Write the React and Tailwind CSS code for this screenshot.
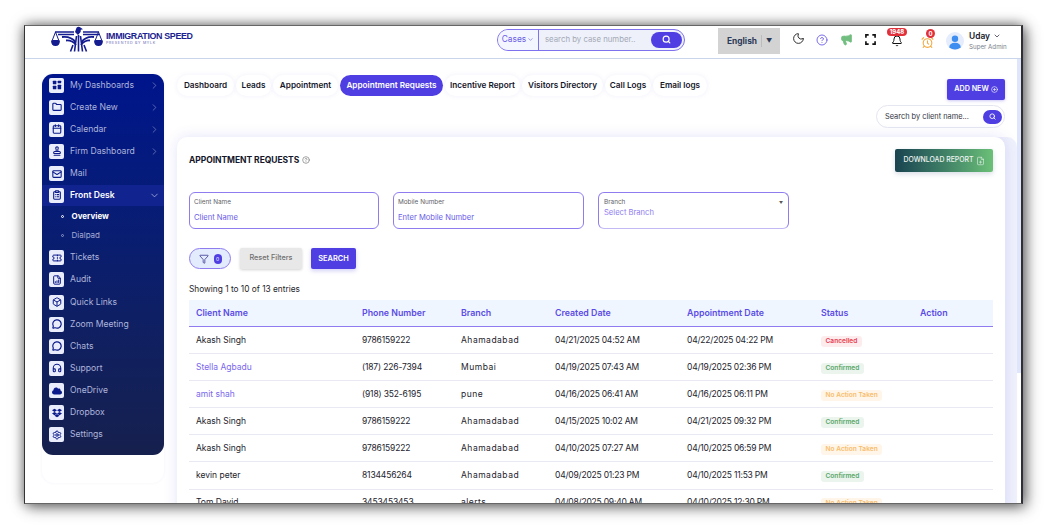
import React from "react";
import { ChevronRight, ChevronDown, Folder, Calendar, Stamp, Mail, ClipboardList, Ticket, FileBarChart, Box, MessageCircle, Headphones, Settings, Search, Moon, CircleHelp, Megaphone, AlarmClock, Bell, Filter, CirclePlus, FilePlus, CircleHelp as Help } from "lucide-react";
import { FaDropbox, FaCloud } from "react-icons/fa";

const font = { fontFamily: "Inter, 'Noto Sans', sans-serif" };

function GridIcon() {
  return (
    <svg viewBox="0 0 12 12" className="w-[10px] h-[10px]" fill="#0b1a8a">
      <rect x="1" y="1" width="4.2" height="4.2" rx=".6" />
      <rect x="6.8" y="1" width="4.2" height="3" rx=".6" />
      <rect x="1" y="6.8" width="4.2" height="4.2" rx=".6" />
      <rect x="6.8" y="5.6" width="4.2" height="5.4" rx=".6" />
    </svg>
  );
}

const ic = "w-[10px] h-[10px] text-[#0b1a8a]";
const menuTop = [
  ["My Dashboards", <GridIcon />, true],
  ["Create New", <Folder className={ic} strokeWidth={2.6} />, true],
  ["Calendar", <Calendar className={ic} strokeWidth={2.6} />, true],
  ["Firm Dashboard", <Stamp className={ic} strokeWidth={2.6} />, true],
  ["Mail", <Mail className={ic} strokeWidth={2.6} />, false],
];
const menuBottom = [
  ["Tickets", <Ticket className={ic} strokeWidth={2.4} />],
  ["Audit", <FileBarChart className={ic} strokeWidth={2.4} />],
  ["Quick Links", <Box className={ic} strokeWidth={2.4} />],
  ["Zoom Meeting", <MessageCircle className={ic} strokeWidth={2.8} />],
  ["Chats", <MessageCircle className={ic} strokeWidth={2.8} />],
  ["Support", <Headphones className={ic} strokeWidth={2.6} />],
  ["OneDrive", <FaCloud className={ic} />],
  ["Dropbox", <FaDropbox className={ic} />],
  ["Settings", <Settings className={ic} strokeWidth={2.4} />],
];

function IconBox({ children }) {
  return (
    <span className="w-[15px] h-[15px] rounded-[2px] bg-[#e9ecfb] flex items-center justify-center shrink-0">
      {children}
    </span>
  );
}

function MenuRow({ label, icon, arrow }) {
  return (
    <div className="h-[22.15px] flex items-center pl-[7px] pr-[4px]">
      <IconBox>{icon}</IconBox>
      <span className="ml-[6px] text-[8.6px] text-[#aeb5dc] flex-1 whitespace-nowrap">{label}</span>
      {arrow && <ChevronRight className="w-[11px] h-[11px] text-[#7f88c4]" strokeWidth={1.5} />}
    </div>
  );
}

function Sidebar() {
  return (
    <div className="w-[122px] ml-[17px] mt-[15px] shrink-0 rounded-[12px] shadow-[0_0_3px_rgba(90,90,200,0.07)] h-[409px]">
      <div className="h-[381px] rounded-[11px] bg-gradient-to-b from-[#00148c] to-[#16204e] overflow-hidden">
        {menuTop.map(([l, i, a]) => <MenuRow key={l} label={l} icon={i} arrow={a} />)}
        <div className="h-[21px] flex items-center pl-[7px] pr-[4px] bg-[#11238f]">
          <IconBox><ClipboardList className={ic} strokeWidth={2.6} /></IconBox>
          <span className="ml-[6px] text-[8.6px] font-semibold text-white flex-1">Front Desk</span>
          <ChevronDown className="w-[11px] h-[11px] text-[#c3c8ea]" strokeWidth={1.5} />
        </div>
        <div className="h-[21px] flex items-center pl-[19px]">
          <span className="w-[3px] h-[3px] rounded-full border-[0.8px] border-white" />
          <span className="ml-[7.5px] text-[8px] font-bold text-white">Overview</span>
        </div>
        <div className="h-[17px] mb-[3px] flex items-center pl-[19px]">
          <span className="w-[3px] h-[3px] rounded-full border-[0.8px] border-[#8f97cc]" />
          <span className="ml-[7.5px] text-[8px] text-[#a5acd6]">Dialpad</span>
        </div>
        {menuBottom.map(([l, i]) => <MenuRow key={l} label={l} icon={i} />)}
      </div>
    </div>
  );
}

function Logo() {
  return (
    <div className="flex items-center -mt-[7px]">
      <svg viewBox="0 0 52 26" className="w-[52px] h-[26px]" fill="none" stroke="#141c8f">
        <path d="M24 6 L25.5 1.8 Q27.5 0 29.5 1.6 L32 3.2 L29.8 3.8 L29.6 6 L27 9 Z" fill="#141c8f" stroke="none" />
        <path d="M4 6 H23 M7 8.4 H23 M48 6 H32 M48 8.4 H32" strokeWidth="1.5" />
        <path d="M11 11 Q20 10 24.5 16 M43 11 Q35 10 30.5 16 M15 14.5 Q21 14 25 19 M39 14.5 Q34 14 30 19" strokeWidth="1.8" />
        <path d="M25.5 10 L23.5 25.5 M27.5 9 V25.5 M29.5 10 L31.5 25.5 M22 19 L19.5 25.5 M33 19 L35.5 25.5" strokeWidth="1.6" />
        <path d="M4.5 6 L1.2 14.5 H7.8 Z M47.5 6 L44.2 14.5 H50.8 Z" strokeWidth="1" />
        <path d="M0 14.5 H9 Q8.8 20 4.5 20 Q.2 20 0 14.5 Z M43 14.5 H52 Q51.8 20 47.5 20 Q43.2 20 43 14.5 Z" fill="#141c8f" stroke="none" />
      </svg>
      <div className="ml-[3px] -mt-[1px] flex flex-col">
        <span className="text-[8.9px] leading-[10px] font-bold text-[#1a2190] whitespace-nowrap tracking-[-0.35px]" style={{ fontFamily: "'Liberation Sans', sans-serif" }}>IMMIGRATION SPEED</span>
        <span className="text-[3.6px] leading-[5px] text-[#5f66b5] tracking-[0.7px] whitespace-nowrap">PRESENTED BY MYLK</span>
      </div>
    </div>
  );
}

function CornersIcon() {
  return (
    <svg viewBox="0 0 12 12" className="w-[11px] h-[11px]" fill="none" stroke="#111" strokeWidth="1.8">
      <path d="M1 4 V1 H4 M8 1 H11 V4 M11 8 V11 H8 M4 11 H1 V8" />
    </svg>
  );
}

function Avatar() {
  return (
    <svg viewBox="0 0 18 18" className="w-[18px] h-[18px]">
      <circle cx="9" cy="9" r="9" fill="#e5ecfb" />
      <circle cx="9" cy="6.8" r="3.2" fill="#3e8df0" />
      <path d="M3.2 15.4 Q3.6 10.8 9 10.8 Q14.4 10.8 14.8 15.4 Q9 19.4 3.2 15.4 Z" fill="#3e8df0" />
    </svg>
  );
}

function Header() {
  return (
    <div className="h-[33px] shrink-0 flex items-center border-b border-[#c9d5ea] bg-white">
      <div className="ml-[26px] w-[446px]"><Logo /></div>
      <div className="h-[22px] -mt-[5px] w-[188px] rounded-full border border-[#7f72ee] flex overflow-hidden bg-[#eef1f9]">
        <div className="w-[41px] bg-[#f3f6fe] border-r border-[#7f72ee] flex items-center justify-center text-[#6a5ce8] text-[8.4px]">
          Cases<ChevronDown className="w-[7px] h-[7px] ml-[1px]" />
        </div>
        <div className="flex-1 flex items-center pl-[6px] pr-[2px] text-[7.8px] text-[#a4a9b8] justify-between">
          <span className="whitespace-nowrap">search by case number..</span>
          <span className="w-[31px] h-[16px] rounded-full bg-[#4f3fe2] flex items-center justify-center">
            <Search className="w-[9px] h-[9px] text-white" strokeWidth={3} />
          </span>
        </div>
      </div>
      <div className="ml-[33px] -mt-[3px] w-[62px] h-[26px] bg-[#d3d3d3] flex items-center pl-[9px] text-[8.4px] font-bold text-[#2c3a57]">
        <span className="pr-[4px] border-r border-[#bcbcbc] leading-[12px]">English</span>
        <span className="ml-[4px] text-[6px]">▼</span>
      </div>
      <div className="ml-[12px] flex items-center -mt-[5px]">
        <Moon className="w-[13px] h-[13px] text-[#111] -mt-[2px]" strokeWidth={1.6} />
        <CircleHelp className="ml-[11px] w-[12px] h-[12px] text-[#6a5ce8]" strokeWidth={1.8} />
        <Megaphone className="ml-[12px] w-[13px] h-[13px] text-[#72be80] fill-[#72be80]" strokeWidth={1.6} />
        <span className="ml-[12px]"><CornersIcon /></span>
        <span className="relative ml-[15px] w-[12px] h-[12px] flex items-center justify-center">
          <Bell className="w-[12px] h-[12px] text-[#111] mt-[3px]" strokeWidth={2} />
          <span className="absolute -top-[6px] -left-[4px] w-[20px] h-[8px] rounded-full bg-[#e2303a] text-white text-[6px] font-bold leading-[8px] text-center">1948</span>
        </span>
        <span className="relative ml-[18px] mt-[5px] w-[13px] h-[13px]">
          <AlarmClock className="w-[13px] h-[13px] text-[#f3a83f]" strokeWidth={2} />
          <span className="absolute -top-[7px] left-[5px] w-[9px] h-[9px] rounded-full bg-[#e2303a] text-white text-[6px] font-bold leading-[9px] text-center">0</span>
        </span>
      </div>
      <div className="ml-[12px] -mt-[2px] flex items-center">
        <Avatar />
        <div className="ml-[5px] flex flex-col">
          <span className="text-[8.4px] leading-[10px] font-semibold text-[#15172b] flex items-center">Uday<ChevronDown className="ml-[3px] w-[8px] h-[8px]" /></span>
          <span className="text-[6.2px] leading-[9px] text-[#7b7f8c] whitespace-nowrap mt-[1px]">Super Admin</span>
        </div>
      </div>
    </div>
  );
}

const tabs = [
  ["Dashboard", 57],
  ["Leads", 35],
  ["Appointment", 65],
  ["Appointment Requests", 103],
  ["Incentive Report", 75],
  ["Visitors Directory", 81],
  ["Call Logs", 46],
  ["Email logs", 54],
];

function Tabs() {
  return (
    <div className="flex gap-[2px] h-[21px] mt-[16px]">
      {tabs.map(([t, w]) => (
        <div
          key={t}
          style={{ width: w }}
          className={
            "h-[21px] rounded-full flex items-center justify-center text-[8.2px] font-semibold whitespace-nowrap " +
            (t === "Appointment Requests"
              ? "bg-[#4f3fe2] text-white"
              : "bg-white text-[#14162a] shadow-[0_0_5px_rgba(90,90,220,0.09)]")
          }
        >
          {t}
        </div>
      ))}
    </div>
  );
}

function Field({ label, value, w }) {
  return (
    <div style={{ width: w }} className="h-[37px] rounded-[6px] border border-[#8f7df0] pl-[4px] pt-[5px]">
      <div className="text-[6.4px] leading-[9px] text-[#5f5f68]">{label}</div>
      <div className="mt-[6px] text-[7.6px] leading-[10px] text-[#6a5ce8]">{value}</div>
    </div>
  );
}

const cols = ["Client Name", "Phone Number", "Branch", "Created Date", "Appointment Date", "Status", "Action"];
const C = "Confirmed", N = "No Action Taken", X = "Cancelled";
const rows = [
  ["Akash Singh", "9786159222", "Ahamadabad", "04/21/2025 04:52 AM", "04/22/2025 04:22 PM", X],
  ["Stella Agbadu", "(187) 226-7394", "Mumbai", "04/19/2025 07:43 AM", "04/19/2025 02:36 PM", C, true],
  ["amit shah", "(918) 352-6195", "pune", "04/16/2025 06:41 AM", "04/16/2025 06:11 PM", N, true],
  ["Akash Singh", "9786159222", "Ahamadabad", "04/15/2025 10:02 AM", "04/21/2025 09:32 PM", C],
  ["Akash Singh", "9786159222", "Ahamadabad", "04/10/2025 07:27 AM", "04/10/2025 06:59 PM", N],
  ["kevin peter", "8134456264", "Ahamadabad", "04/09/2025 01:23 PM", "04/10/2025 11:53 PM", C],
  ["Tom David", "3453453453", "alerts", "04/08/2025 09:40 AM", "04/10/2025 12:30 PM", N],
];
const grid = "grid grid-cols-[166px_99px_94px_132px_134px_99px_1fr] px-[7px] items-center";

function Status({ s }) {
  const cls =
    s === X ? "bg-[#fdecee] text-[#e8404f]" : s === C ? "bg-[#ebf4ed] text-[#5aa76a]" : "bg-[#fff6e9] text-[#f8bd6d]";
  return <span className={"inline-block h-[11px] leading-[11px] px-[4.5px] rounded-[3px] text-[6.6px] font-semibold whitespace-nowrap " + cls}>{s}</span>;
}

function Card() {
  return (
    <div className="mt-[14px] w-[828px] h-[400px] rounded-t-[10px] bg-white shadow-[0_0_14px_rgba(80,80,220,0.16),12px_0_0_#eff1fc] px-[12px] pt-[12px] shrink-0">
      <div className="flex justify-between items-start h-[24px]">
        <div className="flex items-center mt-[5px] text-[8.5px] font-bold text-[#14162a] tracking-[-0.05px]">
          APPOINTMENT REQUESTS
          <Help className="ml-[3px] w-[8px] h-[8px] text-[#777]" />
        </div>
        <div className="w-[98px] h-[23px] rounded-[2px] bg-gradient-to-r from-[#1a4450] to-[#6bc077] text-[#eef4f0] text-[6.9px] font-medium flex items-center justify-center shadow-[0_2px_5px_rgba(60,80,120,0.2)] whitespace-nowrap">
          DOWNLOAD REPORT
          <FilePlus className="ml-[2px] w-[9px] h-[10px]" strokeWidth={1.5} />
        </div>
      </div>
      <div className="mt-[19px] flex gap-[14px]">
        <Field label="Client Name" value="Client Name" w={190} />
        <Field label="Mobile Number" value="Enter Mobile Number" w={191} />
        <div className="w-[191px] h-[37px] rounded-[6px] border border-[#8f7df0] border-b-[#c3b9f5] pl-[5px] pr-[5px] pt-[5px]">
          <div className="flex justify-between items-center">
            <span className="text-[6.4px] leading-[9px] text-[#5f5f68]">Branch</span>
            <span className="text-[4px] leading-[9px] text-[#555]">▼</span>
          </div>
          <div className="mt-[1px] text-[7.6px] leading-[10px] text-[#8f7df0]">Select Branch</div>
        </div>
      </div>
      <div className="mt-[19px] flex items-center h-[21px]">
        <div className="w-[42px] h-[21px] rounded-full border border-[#8f7df0] bg-[#e3ecfc] flex items-center justify-center gap-[5px]">
          <Filter className="w-[10px] h-[10px] text-[#2c2a8c]" strokeWidth={1.8} />
          <span className="w-[8px] h-[10px] rounded-full bg-[#4f3fe2] text-white text-[5px] leading-[10px] text-center">0</span>
        </div>
        <div className="ml-[9px] w-[62px] h-[21px] rounded-[2px] bg-[#e8e8e8] shadow-[0_1px_3px_rgba(0,0,0,0.18)] text-[7.3px] font-medium text-[#6f6f6f] flex items-center justify-center">Reset Filters</div>
        <div className="ml-[9px] w-[45px] h-[21px] rounded-[2px] bg-[#4f3fe2] shadow-[0_2px_4px_rgba(80,70,220,0.25)] text-[7.4px] font-semibold text-white flex items-center justify-center">SEARCH</div>
      </div>
      <div className="mt-[14px] text-[8.3px] leading-[13px] text-[#1e1e28]">Showing 1 to 10 of 13 entries</div>
      <div className="mt-[4px] w-[804px]">
        <div className={grid + " h-[27px] bg-[#f0f6ff] border-b border-[#8f7df0]"}>
          {cols.map((c) => <span key={c} className="text-[8.8px] font-semibold text-[#5b4ce6] whitespace-nowrap">{c}</span>)}
        </div>
        {rows.map((r) => (
          <div key={r[3]} className={grid + " h-[27.1px] border-b border-[#e8e9f2] text-[8.5px] text-[#23232d]"}>
            <span className={r[6] ? "text-[#7a68ee]" : ""}>{r[0]}</span>
            <span className="tracking-[-0.15px]">{r[1]}</span>
            <span className="tracking-[0.5px]">{r[2]}</span>
            <span className="whitespace-nowrap tracking-[-0.2px]">{r[3]}</span>
            <span className="whitespace-nowrap tracking-[-0.2px]">{r[4]}</span>
            <span><Status s={r[5]} /></span>
            <span />
          </div>
        ))}
      </div>
    </div>
  );
}

export default function App() {
  return (
    <div style={font} className="w-[1050px] h-[530px] bg-white pl-[24px] pt-[25px] overflow-hidden">
      <div className="relative w-[999px] h-[479px] bg-white flex flex-col overflow-hidden border-l border-t border-r-2 border-b border-l-[#333] border-t-[#666] border-r-[#2e3036] border-b-[#666] shadow-[0_0_12px_rgba(0,0,0,0.55),4px_4px_14px_rgba(0,0,0,0.35)]">
        <Header />
        <div className="flex-1 flex min-h-0">
          <Sidebar />
          <div className="ml-[13px] flex-1 flex flex-col min-w-0">
            <Tabs />
            <div className="h-[27px] flex flex-col items-end w-[828px] shrink-0">
              <div className="-mt-[17px] w-[58px] h-[21px] shrink-0 rounded-[2px] bg-[#4f3fe2] text-white text-[7.2px] font-semibold flex items-center justify-center shadow-[0_1px_3px_rgba(80,70,220,0.3)] whitespace-nowrap">
                ADD NEW<CirclePlus className="ml-[2px] w-[7px] h-[7px]" />
              </div>
              <div className="mt-[5px] w-[129px] h-[23px] rounded-full border border-[#e4e6f0] bg-white flex items-center justify-between pl-[8px] pr-[2px] text-[7.4px] text-[#33343e] whitespace-nowrap shrink-0">
                Search by client name...
                <span className="w-[19px] h-[14px] rounded-full bg-[#4f3fe2] flex items-center justify-center">
                  <Search className="w-[7px] h-[7px] text-white" strokeWidth={3} />
                </span>
              </div>
            </div>
            <Card />
          </div>
          <div className="w-[4px] h-[314px] bg-[#dfe6fb] shrink-0" />
        </div>
      </div>
    </div>
  );
}
